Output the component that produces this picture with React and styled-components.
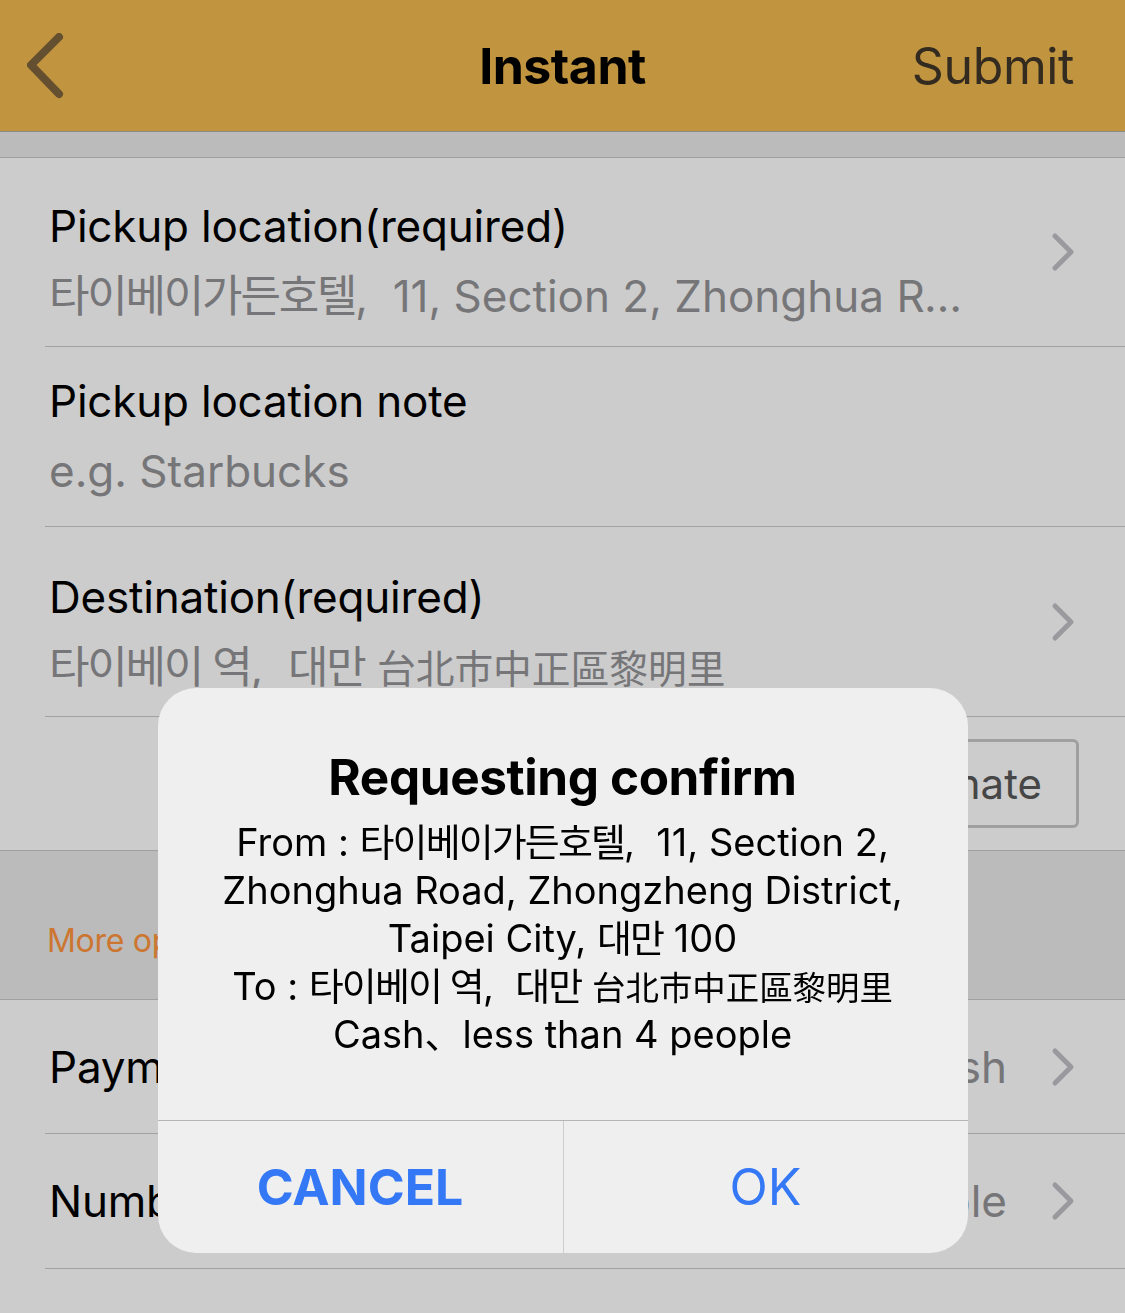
import React from "react";
import styled, { createGlobalStyle } from "styled-components";

const GlobalStyle = createGlobalStyle`
  html, body {
    margin: 0;
    padding: 0;
    background: #ffffff;
  }
  body {
    font-family: "Inter", "Noto Sans CJK KR", sans-serif;
    -webkit-font-smoothing: antialiased;
  }
`;

const Page = styled.div`
  width: 1125px;
  min-height: 1313px;
  background: #ffffff;
`;

const Header = styled.header`
  height: 131px;
  background: #f2b94f;
  border-bottom: 1px solid #adadad;
  display: grid;
  grid-template-columns: 1fr auto 1fr;
  align-items: center;
  padding: 0 51px;
`;

const BackButton = styled.button`
  justify-self: start;
  margin-left: -24px;
  background: none;
  border: none;
  padding: 0;
  display: flex;
  cursor: pointer;
`;

const Title = styled.h1`
  margin: 0;
  font-size: 50px;
  font-weight: 700;
  color: #000;
  letter-spacing: -0.5px;
`;

const SubmitButton = styled.button`
  justify-self: end;
  background: none;
  border: none;
  padding: 0;
  font-family: inherit;
  font-size: 50px;
  color: #403628;
  letter-spacing: -0.4px;
`;

const Gap = styled.div`
  height: ${(p) => p.h}px;
  background: #eaeaea;
  border-bottom: 1px solid #c8c8c8;
  box-sizing: border-box;
`;

const Row = styled.div`
  display: flex;
  align-items: center;
  margin-left: 45px;
  padding-left: 4px;
  padding-right: 50px;
  border-bottom: 1px solid #cbcbcb;
  height: ${(p) => p.h}px;
  box-sizing: content-box;
`;

const RowBody = styled.div`
  flex: 1;
  min-width: 0;
  padding-top: ${(p) => p.pt || 0}px;
  align-self: ${(p) => (p.pt ? "flex-start" : "center")};
`;

const RowTitle = styled.div`
  font-size: 44px;
  line-height: 70px;
  color: #000;
  letter-spacing: -0.2px;
  white-space: nowrap;
`;

const RowSub = styled.div`
  font-size: 44px;
  line-height: 70px;
  color: #949498;
  white-space: nowrap;
  overflow: hidden;
  text-overflow: ellipsis;
  max-width: 915px;
`;

/* Hangul and Han glyphs run narrower in the original than Noto's */
const Hangul = styled.span`
  letter-spacing: -0.05em;
`;

const Han = styled.span`
  font-size: 0.88em;
  line-height: 1;
`;

const RowValue = styled.span`
  font-size: 44px;
  color: #949498;
  margin-right: 44px;
`;

const ButtonRow = styled.div`
  display: flex;
  justify-content: flex-end;
  align-items: center;
  height: 133px;
  padding-right: 46px;
  border-bottom: 1px solid #c8c8c8;
`;

const OutlineButton = styled.button`
  height: 89px;
  padding: 0 34px;
  border: 3px solid #c7c7c7;
  border-radius: 6px;
  background: #ffffff;
  font-family: inherit;
  font-size: 42px;
  color: #585858;
`;

const Section = styled.div`
  height: 149px;
  background: #eaeaea;
  border-bottom: 1px solid #c8c8c8;
  display: flex;
  align-items: flex-end;
  padding: 0 0 39px 47px;
  box-sizing: border-box;
`;

const SectionLabel = styled.span`
  font-size: 32px;
  color: #ff943c;
  letter-spacing: -0.3px;
`;

const Backdrop = styled.div`
  position: fixed;
  inset: 0;
  background: rgba(0, 0, 0, 0.2);
  display: flex;
  justify-content: center;
  align-items: flex-start;
  padding-top: 688px;
`;

const Dialog = styled.div`
  width: 810px;
  background: #efeff0;
  border-radius: 38px;
  overflow: hidden;
  text-align: center;
`;

const DialogContent = styled.div`
  padding: 59px 20px 62px;
  border-bottom: 1px solid #b5b5b8;
`;

const DialogTitle = styled.h2`
  margin: 0 0 11px;
  font-size: 49.5px;
  line-height: 60px;
  font-weight: 700;
  color: #000;
  letter-spacing: -0.4px;
`;

const DialogLine = styled.div`
  font-size: 38px;
  line-height: 48px;
  height: 48px;
  color: #000;
  white-space: nowrap;
`;

const DialogActions = styled.div`
  display: grid;
  grid-template-columns: 1fr 1fr;
  height: 132px;
`;

const DialogButton = styled.button`
  background: none;
  border: none;
  border-left: ${(p) => (p.divider ? "1px solid #cdcdd0" : "none")};
  font-family: inherit;
  font-size: 50px;
  font-weight: ${(p) => (p.bold ? 700 : 400)};
  color: #3478f6;
  padding: 0;
`;

const Chevron = () => (
  <svg width="24" height="40" viewBox="0 0 24 40">
    <polyline
      points="4,4 20,20 4,36"
      fill="none"
      stroke="#c1c1c6"
      strokeWidth="5"
      strokeLinecap="round"
      strokeLinejoin="round"
    />
  </svg>
);

const BackIcon = () => (
  <svg width="40" height="66" viewBox="0 0 40 66">
    <polyline
      points="32,4 4,32 32,61"
      fill="none"
      stroke="#7e643d"
      strokeWidth="8"
      strokeLinecap="round"
      strokeLinejoin="round"
    />
  </svg>
);

export default function App() {
  return (
    <Page>
      <GlobalStyle />
      <Header>
        <BackButton>
          <BackIcon />
        </BackButton>
        <Title>Instant</Title>
        <SubmitButton>Submit</SubmitButton>
      </Header>
      <Gap h={26} />

      <Row h={188}>
        <RowBody pt={33}>
          <RowTitle>Pickup location(required)</RowTitle>
          <RowSub>
            <Hangul>타이베이가든호텔</Hangul>,&nbsp; 11, Section 2, Zhonghua Road, Zhongzheng District
          </RowSub>
        </RowBody>
        <Chevron />
      </Row>
      <Row h={179}>
        <RowBody pt={19}>
          <RowTitle>Pickup location note</RowTitle>
          <RowSub>e.g. Starbucks</RowSub>
        </RowBody>
      </Row>
      <Row h={189}>
        <RowBody pt={35}>
          <RowTitle>Destination(required)</RowTitle>
          <RowSub>
            <Hangul>타이베이 역</Hangul>,&nbsp; <Hangul>대만</Hangul> <Han>台北市中正區黎明里</Han>
          </RowSub>
        </RowBody>
        <Chevron />
      </Row>

      <ButtonRow>
        <OutlineButton>Estimate</OutlineButton>
      </ButtonRow>

      <Section>
        <SectionLabel>More options</SectionLabel>
      </Section>

      <Row h={133}>
        <RowBody>
          <RowTitle>Payment</RowTitle>
        </RowBody>
        <RowValue>Cash</RowValue>
        <Chevron />
      </Row>
      <Row h={134}>
        <RowBody>
          <RowTitle>Number of people</RowTitle>
        </RowBody>
        <RowValue>Less than 4 people</RowValue>
        <Chevron />
      </Row>

      <Backdrop>
        <Dialog>
          <DialogContent>
            <DialogTitle>Requesting confirm</DialogTitle>
            <DialogLine>
              From : <Hangul>타이베이가든호텔</Hangul>,&nbsp; 11, Section 2,
            </DialogLine>
            <DialogLine>Zhonghua Road, Zhongzheng District,</DialogLine>
            <DialogLine>
              Taipei City, <Hangul>대만</Hangul> 100
            </DialogLine>
            <DialogLine>
              To : <Hangul>타이베이 역</Hangul>,&nbsp; <Hangul>대만</Hangul> <Han>台北市中正區黎明里</Han>
            </DialogLine>
            <DialogLine>Cash、less than 4 people</DialogLine>
          </DialogContent>
          <DialogActions>
            <DialogButton bold>CANCEL</DialogButton>
            <DialogButton divider>OK</DialogButton>
          </DialogActions>
        </Dialog>
      </Backdrop>
    </Page>
  );
}
